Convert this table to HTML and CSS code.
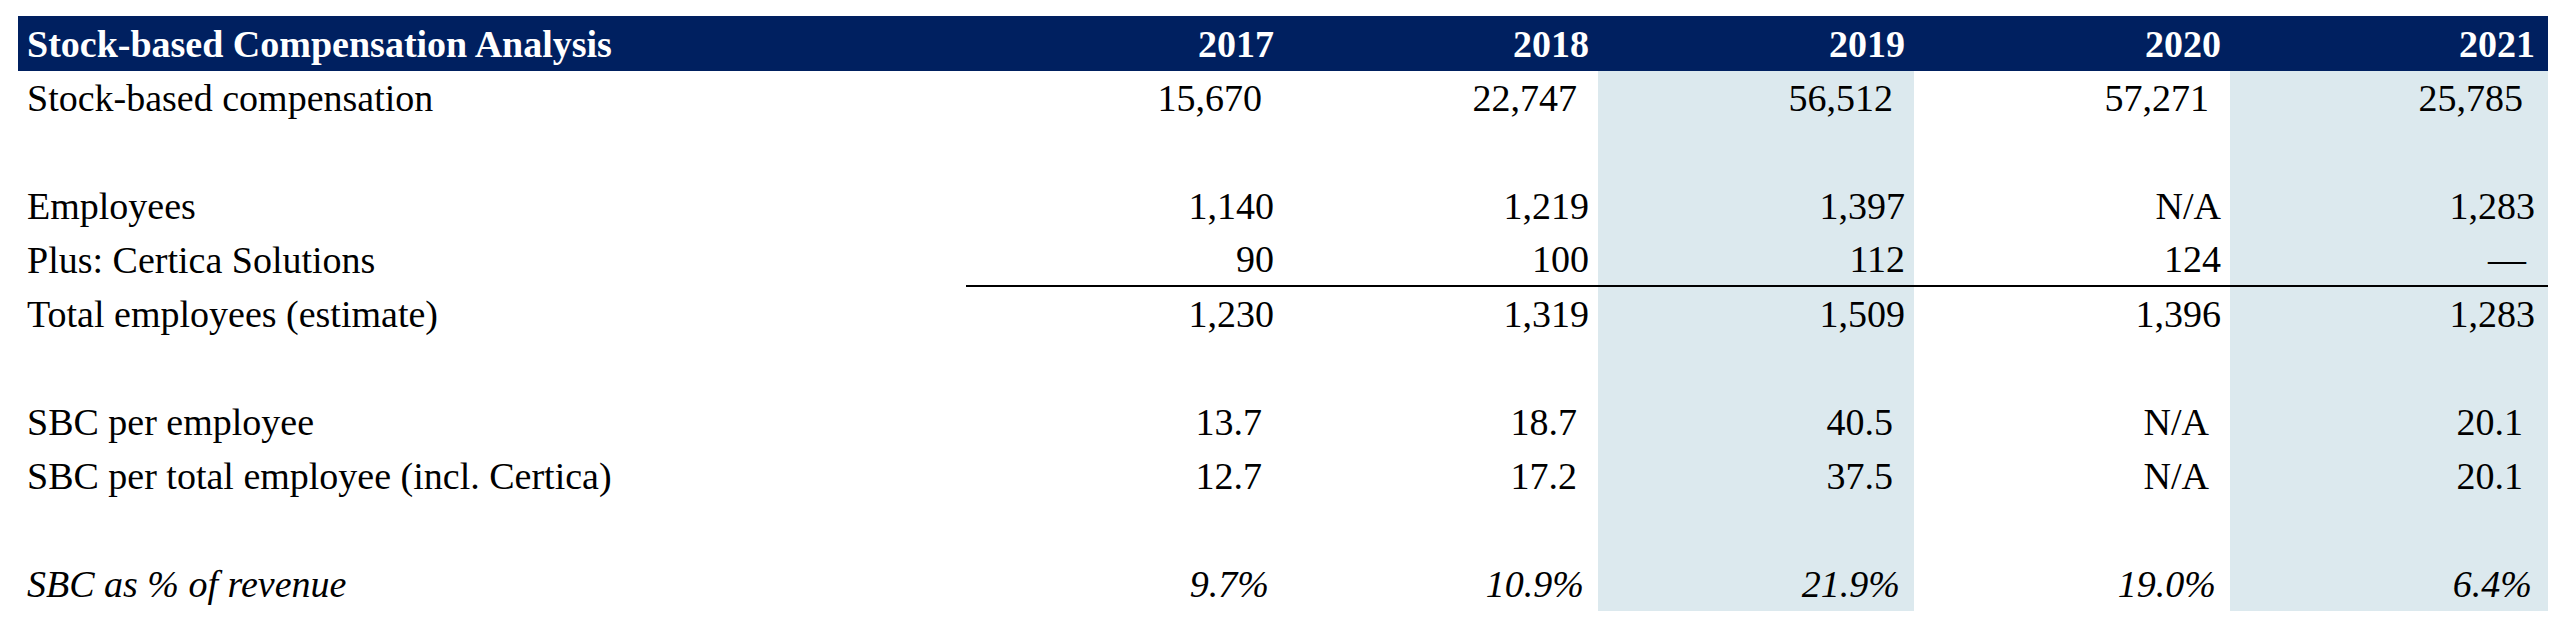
FILE: index.html
```html
<!DOCTYPE html>
<html lang="en">
<head>
<meta charset="utf-8">
<title>Stock-based Compensation Analysis</title>
<link rel="stylesheet" href="styles.css">
</head>
<body>
<div class="sheet">
  <div class="row head">
    <div class="label">Stock-based Compensation Analysis</div>
    <div class="num">2017</div>
    <div class="num">2018</div>
    <div class="num">2019</div>
    <div class="num">2020</div>
    <div class="num last">2021</div>
  </div>
  <div class="row">
    <div class="label">Stock-based compensation</div>
    <div class="num wide">15,670</div>
    <div class="num wide">22,747</div>
    <div class="num wide shade">56,512</div>
    <div class="num wide">57,271</div>
    <div class="num wide shade last">25,785</div>
  </div>
  <div class="row">
    <div class="label"></div>
    <div class="num"></div>
    <div class="num"></div>
    <div class="num shade"></div>
    <div class="num"></div>
    <div class="num shade last"></div>
  </div>
  <div class="row">
    <div class="label">Employees</div>
    <div class="num">1,140</div>
    <div class="num">1,219</div>
    <div class="num shade">1,397</div>
    <div class="num">N/A</div>
    <div class="num shade last">1,283</div>
  </div>
  <div class="row">
    <div class="label">Plus: Certica Solutions</div>
    <div class="num rule">90</div>
    <div class="num rule">100</div>
    <div class="num rule shade">112</div>
    <div class="num rule">124</div>
    <div class="num rule shade last dash">&mdash;</div>
  </div>
  <div class="row">
    <div class="label">Total employees (estimate)</div>
    <div class="num">1,230</div>
    <div class="num">1,319</div>
    <div class="num shade">1,509</div>
    <div class="num">1,396</div>
    <div class="num shade last">1,283</div>
  </div>
  <div class="row">
    <div class="label"></div>
    <div class="num"></div>
    <div class="num"></div>
    <div class="num shade"></div>
    <div class="num"></div>
    <div class="num shade last"></div>
  </div>
  <div class="row">
    <div class="label">SBC per employee</div>
    <div class="num wide">13.7</div>
    <div class="num wide">18.7</div>
    <div class="num wide shade">40.5</div>
    <div class="num wide">N/A</div>
    <div class="num wide shade last">20.1</div>
  </div>
  <div class="row">
    <div class="label">SBC per total employee (incl. Certica)</div>
    <div class="num wide">12.7</div>
    <div class="num wide">17.2</div>
    <div class="num wide shade">37.5</div>
    <div class="num wide">N/A</div>
    <div class="num wide shade last">20.1</div>
  </div>
  <div class="row">
    <div class="label"></div>
    <div class="num"></div>
    <div class="num"></div>
    <div class="num shade"></div>
    <div class="num"></div>
    <div class="num shade last"></div>
  </div>
  <div class="row italic">
    <div class="label">SBC as % of revenue</div>
    <div class="num pct">9.7%</div>
    <div class="num pct">10.9%</div>
    <div class="num pct shade">21.9%</div>
    <div class="num pct">19.0%</div>
    <div class="num pct shade last">6.4%</div>
  </div>
</div>
</body>
</html>
```
FILE: styles.css
```css
html, body {
  margin: 0;
  padding: 0;
  background: #ffffff;
}

body {
  padding: 16px 0 0 18px;
  font-family: "Liberation Serif", "Times New Roman", serif;
  font-size: 38px;
  color: #000000;
}

.sheet {
  width: 2530px;
  display: flex;
  flex-direction: column;
}

.row {
  display: grid;
  grid-template-columns: 948px 317px 315px 316px 316px 318px;
  height: 54px;
  line-height: 54px;
}

.row.head {
  height: 55px;
  line-height: 56px;
  background: #002060;
  color: #ffffff;
  font-weight: bold;
}

.label {
  padding-left: 9px;
  white-space: nowrap;
}

.num {
  text-align: right;
  padding-right: 9px;
  white-space: nowrap;
  box-sizing: border-box;
}

.num.last {
  padding-right: 13px;
}

.num.wide {
  padding-right: 21px;
}

.num.wide.last {
  padding-right: 25px;
}

.num.pct {
  padding-right: 14px;
}

.num.pct.last {
  padding-right: 16px;
}

.num.dash {
  padding-right: 22px;
}

.italic {
  font-style: italic;
}

.shade {
  background: #dce9ee;
}

.rule {
  border-bottom: 2px solid #000000;
  line-height: 52px;
}
```
